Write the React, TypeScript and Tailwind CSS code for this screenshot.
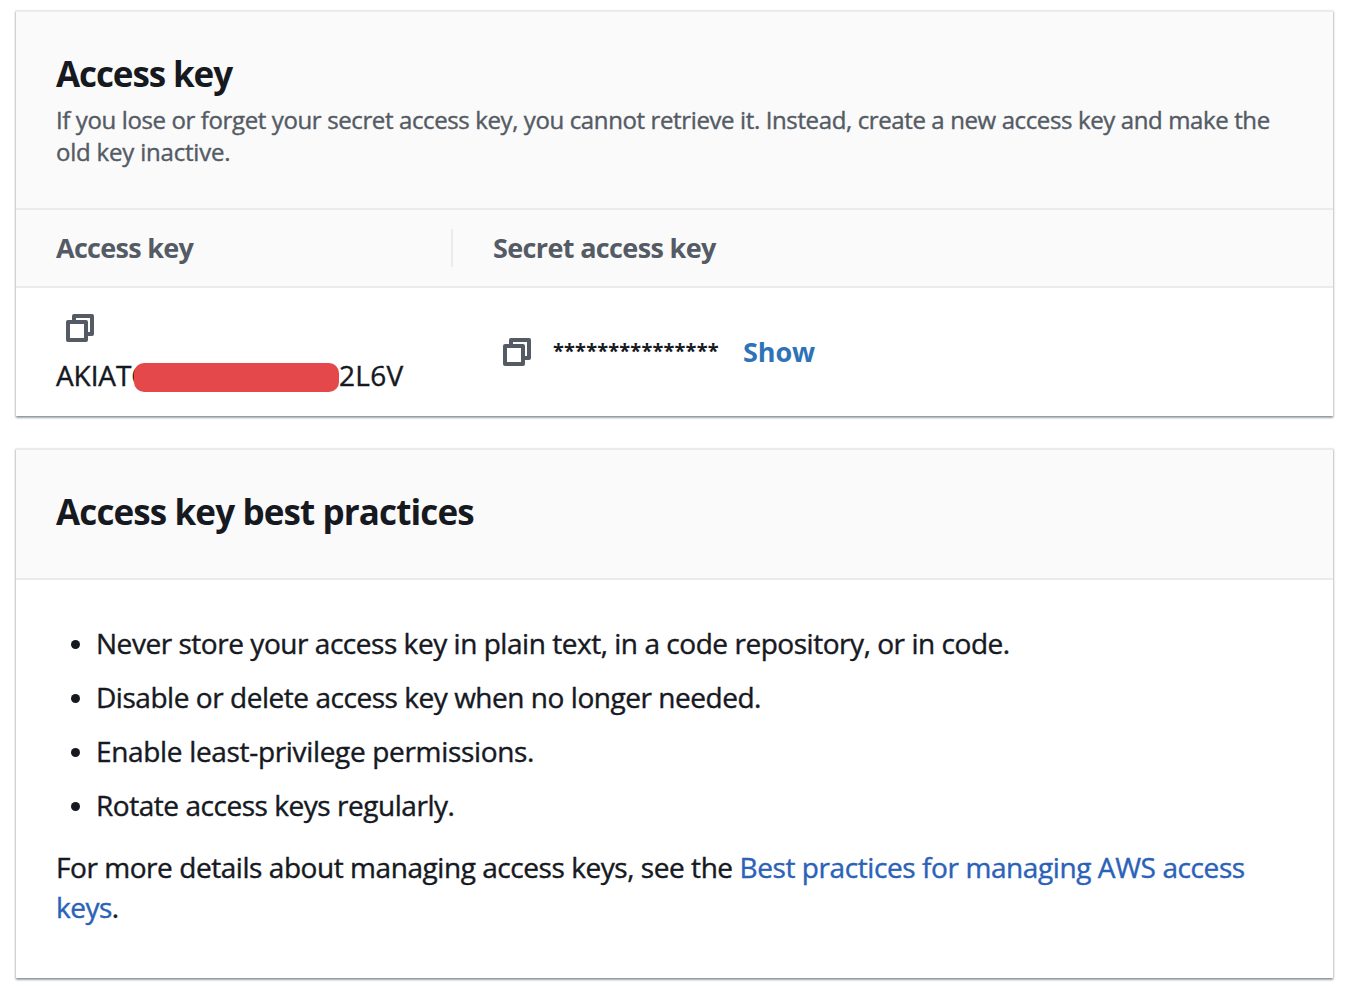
import type { ReactNode } from "react";

function CopyIcon() {
  return (
    <svg width="28" height="28" viewBox="0 0 28 28" fill="none" stroke="#545b64" strokeWidth="4" strokeLinejoin="round" className="block shrink-0">
      <path d="M2 8h18v18H2z" />
      <path d="M8 8V2h18v18h-6" />
    </svg>
  );
}

function Card({ className, children }: { className: string; children: ReactNode }) {
  return (
    <section className={`w-[1317px] border-t-2 border-[#ebebeb] bg-white shadow-[0_2px_2px_0_rgba(0,28,36,0.3),1px_1px_2px_0_rgba(0,28,36,0.15),-1px_1px_2px_0_rgba(0,28,36,0.15)] ${className}`}>
      {children}
    </section>
  );
}

const practices = [
  { text: "Never store your access key in plain text, in a code repository, or in code.", tracking: "tracking-[-0.46px]" },
  { text: "Disable or delete access key when no longer needed.", tracking: "tracking-[-0.46px]" },
  { text: "Enable least-privilege permissions.", tracking: "tracking-[-0.33px]" },
  { text: "Rotate access keys regularly.", tracking: "tracking-[-0.46px]" },
];

export default function App() {
  return (
    <main className="h-[994px] overflow-hidden bg-white pt-[10px] pl-4 font-['Open_Sans',sans-serif] text-[28px] leading-10 font-medium whitespace-nowrap text-[#16191f] [-webkit-text-stroke:0.4px]">
      <Card className="h-[406px]">
        <header className="h-[198px] border-b-2 border-[#ebebeb] bg-[#fafafa] px-10 pt-10">
          <h1 className="text-[35px] leading-[44px] font-bold [-webkit-text-stroke:0px]"><span className="tracking-[-1.1px]">Access key</span></h1>
          <p className="mt-2 text-2xl leading-8 text-[#545b64]">
            <span className="tracking-[-0.38px]">If you lose or forget your secret access key, you cannot retrieve it. Instead, create a new access key and make the</span>
            <br />
            <span className="tracking-[-0.2px]">old key inactive.</span>
          </p>
        </header>
        <div className="flex h-[78px] items-center border-b-2 border-[#ebebeb] bg-[#fafafa] text-[27px] font-bold text-[#545b64] [-webkit-text-stroke:0px]">
          <div className="flex h-[38px] w-[437px] items-center border-r-2 border-[#ebebeb] pl-10"><span className="tracking-[-0.7px]">Access key</span></div>
          <div className="pl-10"><span className="tracking-[-0.64px]">Secret access key</span></div>
        </div>
        <div className="flex h-32">
          <div className="w-[437px] pt-[26px] pl-10">
            <div className="pl-[10px]"><CopyIcon /></div>
            <div className="relative mt-[14px] flex h-10 items-center pb-0.5">
              <span className="w-[283px] tracking-[-0.1px]">AKIATC</span>
              <span className="tracking-[0.3px]">2L6V</span>
              <span className="absolute top-[7px] left-[78px] h-[29px] w-[205px] rounded-[10px] bg-[#e5484b]" />
            </div>
          </div>
          <div className="flex items-center pl-[50px]">
            <CopyIcon />
            <span className="ml-[22px] w-[190px] pb-0.5 text-xl leading-10 font-bold tracking-[0.15px] [-webkit-text-stroke:0px]">***************</span>
            <a className="text-[27px] font-bold text-[#2e73b8] [-webkit-text-stroke:0px]"><span className="tracking-[-0.1px]">Show</span></a>
          </div>
        </div>
      </Card>
      <Card className="mt-8 h-[530px]">
        <header className="h-[130px] border-b-2 border-[#ebebeb] bg-[#fafafa] px-10 pt-10">
          <h2 className="text-[35px] leading-[44px] font-bold [-webkit-text-stroke:0px]"><span className="tracking-[-0.88px]">Access key best practices</span></h2>
        </header>
        <div className="px-10 pt-11">
          <ul className="flex flex-col gap-[14px]">
            {practices.map(({ text, tracking }) => (
              <li key={text} className="flex h-10 items-center">
                <span className="mr-4 ml-[15px] size-[9px] rounded-full bg-[#16191f]" />
                <span className={`pb-0.5 ${tracking}`}>{text}</span>
              </li>
            ))}
          </ul>
          <p className="mt-[21px]">
            <span className="tracking-[-0.445px]">For more details about managing access keys, see the </span>
            <a className="text-[#2b62b8]"><span className="tracking-[-0.41px]">Best practices for managing AWS access</span><br /><span className="tracking-[-0.5px]">keys</span></a>.
          </p>
        </div>
      </Card>
    </main>
  );
}
